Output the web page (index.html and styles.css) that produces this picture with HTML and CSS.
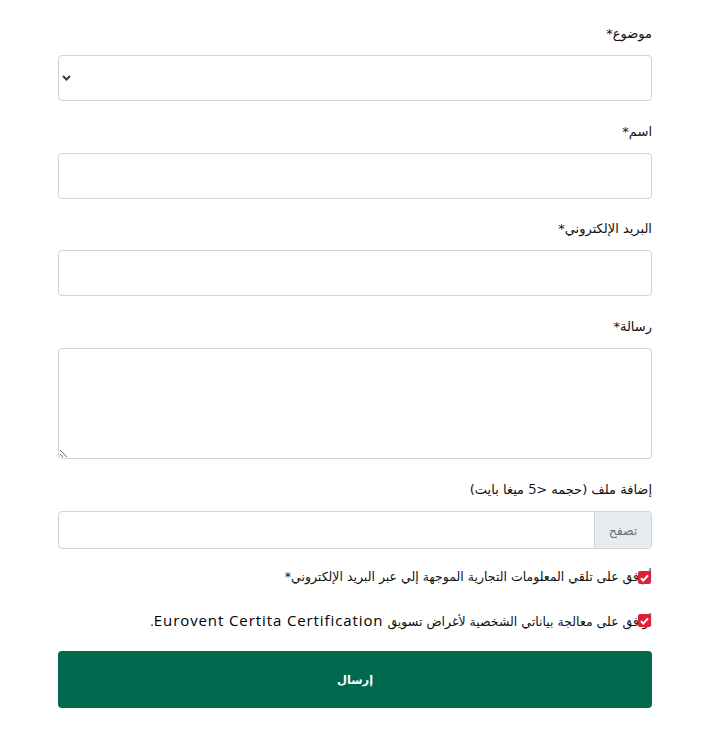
FILE: index.html
```html
<!DOCTYPE html>
<html lang="ar" dir="rtl">
<head>
<meta charset="utf-8">
<link rel="stylesheet" href="styles.css">
</head>
<body>
<form class="form">
  <div class="group">
    <label class="label">موضوع*</label>
    <div class="select-wrap">
      <select class="control select"></select>
      <svg class="chevron" width="9" height="6" viewBox="0 0 9 6"><path d="M1 1l3.5 3.5L8 1" fill="none" stroke="#343a40" stroke-width="2"/></svg>
    </div>
  </div>
  <div class="group group-tight">
    <label class="label">اسم*</label>
    <input class="control" type="text">
  </div>
  <div class="group">
    <label class="label">البريد الإلكتروني*</label>
    <input class="control" type="email">
  </div>
  <div class="group group-tight">
    <label class="label">رسالة*</label>
    <textarea class="control area"></textarea>
  </div>
  <div class="group">
    <label class="label">إضافة ملف (حجمه &lt;<span class="latin-num">5</span> ميغا بايت)</label>
    <div class="file">
      <span class="browse">تصفح</span>
      <span class="file-name"></span>
    </div>
  </div>
  <div class="check">
    <span class="box"><svg width="9" height="8" viewBox="0 0 9 8"><path d="M1 4.2l2.3 2.3L8 1.3" fill="none" stroke="#fff" stroke-width="2"/></svg></span>
    <span class="check-text">أوافق على تلقي المعلومات التجارية الموجهة إلي عبر البريد الإلكتروني*</span>
  </div>
  <div class="check">
    <span class="box"><svg width="9" height="8" viewBox="0 0 9 8"><path d="M1 4.2l2.3 2.3L8 1.3" fill="none" stroke="#fff" stroke-width="2"/></svg></span>
    <span class="check-text">أوافق على معالجة بياناتي الشخصية لأغراض تسويق <span class="latin">Eurovent Certita Certification</span>.</span>
  </div>
  <button class="submit" type="button">إرسال</button>
</form>
</body>
</html>
```
FILE: styles.css
```css
html, body {
  margin: 0;
  background: #fff;
}
body {
  font-family: "DejaVu Sans", "Open Sans", sans-serif;
  color: #212529;
  padding: 23px 63px 0 58px;
}
.form {
  display: flex;
  flex-direction: column;
}
.group {
  display: flex;
  flex-direction: column;
  margin-bottom: 20px;
}
.group-tight {
  margin-bottom: 19px;
}
.label {
  font-size: 13px;
  line-height: 22px;
  margin-bottom: 10px;
  color: #111;
}
.latin-num {
  font-family: "Open Sans", sans-serif;
  font-size: 14px;
}
.control {
  box-sizing: border-box;
  width: 100%;
  height: 46px;
  border: 1px solid #ced4da;
  border-radius: 4px;
  background: #fff;
  margin: 0;
  font-family: inherit;
  font-size: 14px;
}
.select-wrap {
  position: relative;
}
.select {
  appearance: none;
  -webkit-appearance: none;
}
.chevron {
  position: absolute;
  left: 4px;
  top: 20px;
}
.area {
  height: 111px;
  resize: vertical;
  display: block;
}
.file {
  display: flex;
  height: 38px;
  box-sizing: border-box;
  border: 1px solid #ced4da;
  border-radius: 4px;
  overflow: hidden;
}
.browse {
  width: 56px;
  background: #e9ecef;
  border-left: 1px solid #ced4da;
  color: #6c757d;
  font-size: 12.5px;
  display: flex;
  align-items: center;
  justify-content: center;
}
.file-name {
  flex: 1;
}
.check {
  position: relative;
  font-size: 12.5px;
  line-height: 22px;
  margin-top: -3px;
  margin-bottom: 21px;
  color: #111;
}
.check + .check {
  margin-top: 0;
  margin-bottom: 18px;
}
.box {
  position: absolute;
  right: 1px;
  top: 5px;
  width: 13px;
  height: 13px;
  border-radius: 2px;
  background: #e0203a;
  display: flex;
  align-items: center;
  justify-content: center;
}
.latin {
  font-family: "Open Sans", sans-serif;
  font-size: 15px;
  font-weight: 500;
  letter-spacing: 0.9px;
  color: #000;
}
.submit {
  height: 57px;
  border: none;
  border-radius: 4px;
  background: #00694d;
  color: #fff;
  font-family: inherit;
  font-size: 11.5px;
  font-weight: bold;
  cursor: pointer;
}
```
